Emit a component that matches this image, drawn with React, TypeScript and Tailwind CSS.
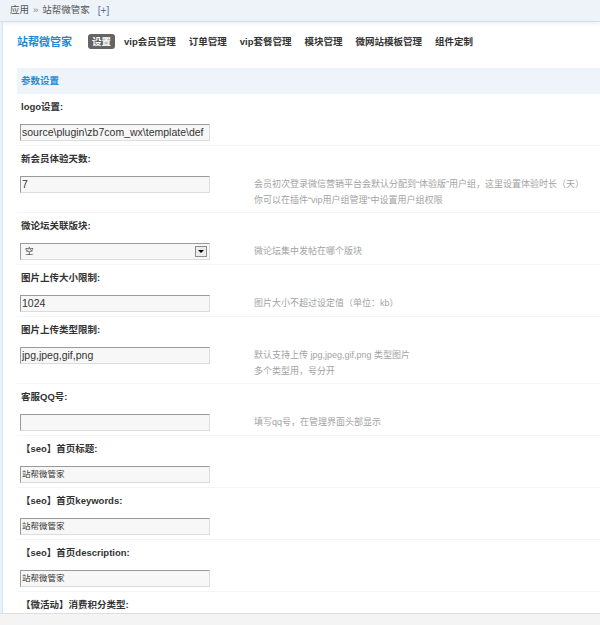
const FONT = "font-['Liberation_Sans','Noto_Sans_CJK_SC',sans-serif]";

const NAV = ["vip会员管理", "订单管理", "vip套餐管理", "模块管理", "微网站模板管理", "组件定制"];

type Item = {
  label: string;
  value?: string;
  cjk?: boolean;
  select?: boolean;
  help?: string[];
};

const ITEMS: Item[] = [
  { label: "logo设置:", value: "source\\plugin\\zb7com_wx\\template\\def" },
  {
    label: "新会员体验天数:",
    value: "7",
    help: [
      "会员初次登录微信营销平台会默认分配到\u201c体验版\u201d用户组，这里设置体验时长（天）",
      "你可以在插件\u201cvip用户组管理\u201d中设置用户组权限",
    ],
  },
  { label: "微论坛关联版块:", value: "空", select: true, cjk: true, help: ["微论坛集中发帖在哪个版块"] },
  { label: "图片上传大小限制:", value: "1024", help: ["图片大小不超过设定值（单位：kb）"] },
  {
    label: "图片上传类型限制:",
    value: "jpg,jpeg,gif,png",
    help: ["默认支持上传 jpg,jpeg,gif,png 类型图片", "多个类型用，号分开"],
  },
  { label: "客服QQ号:", value: "", help: ["填写qq号，在管理界面头部显示"] },
  { label: "【seo】首页标题:", value: "站帮微管家", cjk: true },
  { label: "【seo】首页keywords:", value: "站帮微管家", cjk: true },
  { label: "【seo】首页description:", value: "站帮微管家", cjk: true },
  { label: "【微活动】消费积分类型:" },
];

function Field({ item }: { item: Item }) {
  const text = item.cjk ? "text-[8.5px]" : "text-[10.5px]";
  if (item.select) {
    return (
      <div className="flex h-[17px] w-[190px] items-center justify-between border border-t-[#9a9a9a] border-l-[#9a9a9a] border-b-[#dcdcdc] border-r-[#dcdcdc] bg-[#f7f7f7] pl-[4px] pr-[2px]">
        <span className={`${text} text-[#333]`}>{item.value}</span>
        <span className="flex h-[11px] w-[12px] items-center justify-center border border-[#8c8c8c] bg-[#ececec]">
          <span className="h-0 w-0 border-x-[3px] border-t-[3px] border-x-transparent border-t-black" />
        </span>
      </div>
    );
  }
  return (
    <div
      className={`flex h-[17px] w-[190px] items-center overflow-hidden whitespace-nowrap border border-t-[#9a9a9a] border-l-[#9a9a9a] border-b-[#dcdcdc] border-r-[#dcdcdc] bg-[#f7f7f7] pl-[1px] ${text} text-[#333]`}
    >
      {item.value}
    </div>
  );
}

export default function App() {
  return (
    <div className={`${FONT} flex h-[625px] w-[600px] flex-col overflow-hidden bg-white text-[#333]`}>
      {/* breadcrumb */}
      <div className="flex h-[22px] shrink-0 items-center gap-[4px] border-b border-[#d4dee8] bg-[#eef3f9] pl-[10px] text-[9.5px] text-[#555] shadow-[0_2px_3px_rgba(0,0,0,0.06)]">
        <span>应用</span>
        <span className="text-[#888]">»</span>
        <span>站帮微管家</span>
        <span className="ml-[4px] text-[10px] text-[#5a6fa8]">[+]</span>
      </div>

      <div className="flex min-h-0 flex-1">
        <div className="w-[3px] shrink-0 border-r border-[#d3e6f6] bg-[#eaf3fb]" />
        <div className="min-w-0 flex-1 pl-[14px]">
          {/* title + nav */}
          <div className="flex h-[46px] items-start pt-[12px]">
            <span className="text-[11px] font-bold leading-[16px] text-[#1a8ad4]">站帮微管家</span>
            <div className="ml-[16px] flex items-center gap-[5px] text-[9.5px] font-bold">
              <span className="rounded-[3px] bg-[#646464] px-[4px] leading-[15px] text-white">设置</span>
              {NAV.map((n) => (
                <span key={n} className="px-[4px] leading-[15px] text-[#333]">
                  {n}
                </span>
              ))}
            </div>
          </div>

          {/* section header */}
          <div className="flex h-[26px] items-center bg-[#eef4fa] pl-[4px] text-[9.5px] font-bold text-[#2a8ad2]">
            参数设置
          </div>

          {ITEMS.map((item) => (
            <div key={item.label}>
              <div className="flex h-[26px] items-center pl-[4px] text-[9.5px] font-bold text-[#333]">
                {item.label}
              </div>
              {item.value !== undefined && (
                <div className="flex min-h-[26px] border-b border-[#f5f5f5] py-[4px]">
                  <div className="w-[237px] shrink-0 pl-[3px]">
                    <Field item={item} />
                  </div>
                  {item.help && (
                    <div className="text-[9px] leading-[16px] text-[#a3a3a3]">
                      {item.help.map((h) => (
                        <div key={h} className="whitespace-nowrap">
                          {h}
                        </div>
                      ))}
                    </div>
                  )}
                </div>
              )}
            </div>
          ))}
        </div>
      </div>

      <div className="h-[12px] shrink-0 border-t border-[#dedede] bg-[#f4f4f4]" />
    </div>
  );
}
